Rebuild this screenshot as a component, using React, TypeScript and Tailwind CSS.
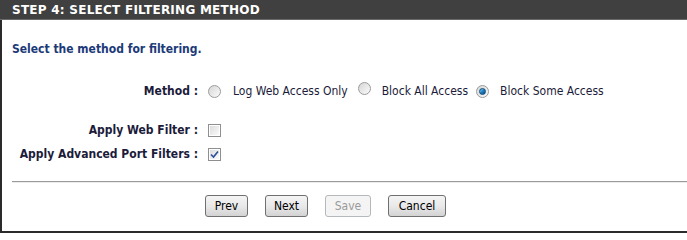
import React from "react";

const font = { fontFamily: '"DejaVu Sans Condensed", "DejaVu Sans", sans-serif' };

function Radio({ checked }: { checked?: boolean }) {
  return (
    <span className="inline-flex w-[13px] h-[13px] rounded-full border border-[#9a9a9a] bg-gradient-to-br from-[#d6d6d6] to-[#fbfbfb] items-center justify-center shrink-0">
      {checked && (
        <span className="w-[7px] h-[7px] rounded-full bg-gradient-to-br from-[#7fd0f5] via-[#1f7fc0] to-[#0c4f86] border border-[#0f4a7a]" />
      )}
    </span>
  );
}

function Checkbox({ checked }: { checked?: boolean }) {
  return (
    <span className="inline-flex w-[13px] h-[13px] border border-[#8f8f8f] bg-white p-px shrink-0">
      <span className="flex-1 bg-gradient-to-br from-[#dcdcdc] to-[#fbfbfb] flex items-center justify-center">
        {checked && (
          <svg width="9" height="9" viewBox="0 0 9 9">
            <path d="M1 4.5 L3.5 7 L8 1.5" fill="none" stroke="#2a4f9a" strokeWidth="1.6" />
          </svg>
        )}
      </span>
    </span>
  );
}

function Btn({ children, disabled, w }: { children: React.ReactNode; disabled?: boolean; w: string }) {
  return (
    <span
      className={
        "inline-flex h-[22px] items-center justify-center rounded-[3px] border text-[12px] " +
        w +
        (disabled
          ? " border-[#b5b9bc] bg-[#f4f4f4] text-[#9a9a9a]"
          : " border-[#707070] bg-gradient-to-b from-[#f4f4f4] via-[#e9e9e9] to-[#d3d3d3] text-black")
      }
    >
      {children}
    </span>
  );
}

export default function App() {
  return (
    <div className="w-[687px] h-[233px] bg-white" style={font}>
      <div className="h-[20px] bg-[#404040] border-b border-[#6a6a6a] flex items-center pl-[12px]">
        <span className="text-white font-bold text-[12px] tracking-[0.25px]" style={{ fontFamily: '"DejaVu Sans", sans-serif' }}>
          STEP 4: SELECT FILTERING METHOD
        </span>
      </div>
      <div className="h-[213px] border-l-2 border-b-2 border-[#2b2b2b] flex flex-col">
        <div className="pl-[10px] pt-[21px] text-[12px] font-bold text-[#1c3a78] leading-[16px]">
          Select the method for filtering.
        </div>
        <div className="flex items-center mt-[27px] h-[14px] text-[12px]">
          <div className="w-[196px] text-right font-bold text-[#1b1b3a]">Method :</div>
          <div className="ml-[10px] flex items-center text-[#1b1b3a]">
            <Radio />
            <span className="ml-[12px]">Log Web Access Only</span>
            <span className="ml-[10px]"><Radio /></span>
            <span className="ml-[11px]">Block All Access</span>
            <span className="ml-[8px]"><Radio checked /></span>
            <span className="ml-[11px]">Block Some Access</span>
          </div>
        </div>
        <div className="flex items-center mt-[25px] h-[14px] text-[12px]">
          <div className="w-[196px] text-right font-bold text-[#1b1b3a]">Apply Web Filter :</div>
          <div className="ml-[10px] flex items-center"><Checkbox /></div>
        </div>
        <div className="flex items-center mt-[10px] h-[14px] text-[12px]">
          <div className="w-[196px] text-right font-bold text-[#1b1b3a]">Apply Advanced Port Filters :</div>
          <div className="ml-[10px] flex items-center"><Checkbox checked /></div>
        </div>
        <div className="ml-[10px] mt-[20px] h-[2px] border-t border-[#9a9a9a] border-b border-b-[#ececec]" />
        <div className="flex items-center mt-[12px] pl-[203px] gap-[17px]">
          <Btn w="w-[43px]">Prev</Btn>
          <Btn w="w-[43px]">Next</Btn>
          <Btn w="w-[46px]" disabled>Save</Btn>
          <Btn w="w-[58px]">Cancel</Btn>
        </div>
      </div>
    </div>
  );
}
